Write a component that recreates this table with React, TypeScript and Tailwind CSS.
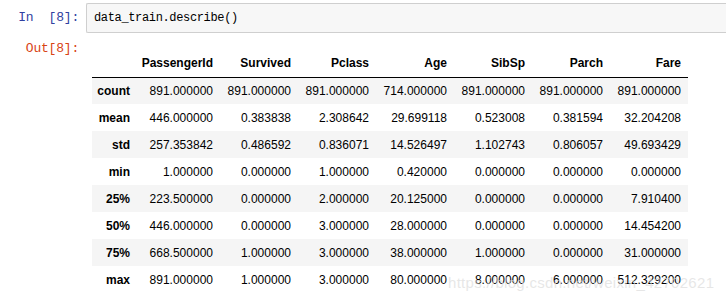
const columns = ["PassengerId", "Survived", "Pclass", "Age", "SibSp", "Parch", "Fare"];

const rows: [string, string[]][] = [
  ["count", ["891.000000", "891.000000", "891.000000", "714.000000", "891.000000", "891.000000", "891.000000"]],
  ["mean", ["446.000000", "0.383838", "2.308642", "29.699118", "0.523008", "0.381594", "32.204208"]],
  ["std", ["257.353842", "0.486592", "0.836071", "14.526497", "1.102743", "0.806057", "49.693429"]],
  ["min", ["1.000000", "0.000000", "1.000000", "0.420000", "0.000000", "0.000000", "0.000000"]],
  ["25%", ["223.500000", "0.000000", "2.000000", "20.125000", "0.000000", "0.000000", "7.910400"]],
  ["50%", ["446.000000", "0.000000", "3.000000", "28.000000", "0.000000", "0.000000", "14.454200"]],
  ["75%", ["668.500000", "1.000000", "3.000000", "38.000000", "1.000000", "0.000000", "31.000000"]],
  ["max", ["891.000000", "1.000000", "3.000000", "80.000000", "8.000000", "6.000000", "512.329200"]],
];

const mono = "font-['Liberation_Mono',monospace]";

export default function App() {
  return (
    <div className="relative w-[726px] h-[302px] overflow-hidden bg-white">
      {/* Input cell */}
      <div className="flex pt-[3px]">
        <div className={`w-[86px] shrink-0 pr-[7px] flex items-center justify-end text-[13px] text-[#303f9f] ${mono}`}>
          <span className="tracking-[-0.2px]">In&nbsp;&nbsp;[8]:</span>
        </div>
        <div className="flex-1 h-[30px] border border-[#cfcfcf] border-r-0 rounded-l-[2px] bg-[#f7f7f7] pl-[7px] flex items-center">
          <span className={`text-[12px] tracking-[-0.35px] text-black ${mono}`}>data_train.describe()</span>
        </div>
      </div>

      {/* Output cell */}
      <div className="flex mt-[8px]">
        <div className={`w-[86px] shrink-0 pr-[7px] text-right text-[13px] leading-[16px] text-[#d84315] ${mono}`}>
          <span className="tracking-[-0.2px]">Out[8]:</span>
        </div>
        <div className="pl-[6px] pt-[8px]">
          <table className="border-collapse text-[12px] text-black font-['Liberation_Sans',Arial,sans-serif]">
            <thead>
              <tr className="h-[28px] border-b border-black">
                <th className="w-[45px]"></th>
                {columns.map((c, i) => (
                  <th key={c} className={`${i === 0 ? "w-[83px]" : "w-[78px]"} text-right font-bold pr-[7px]`}>
                    {c}
                  </th>
                ))}
              </tr>
            </thead>
            <tbody>
              {rows.map(([name, vals], r) => (
                <tr key={name} className={`h-[27px] ${r % 2 === 0 ? "bg-[#f5f5f5]" : "bg-white"}`}>
                  <th className="text-right font-bold pr-[7px]">{name}</th>
                  {vals.map((v, i) => (
                    <td key={i} className="text-right pr-[7px]">
                      {v}
                    </td>
                  ))}
                </tr>
              ))}
            </tbody>
          </table>
        </div>
      </div>

      {/* watermark */}
      <div className="absolute left-[448px] top-[274px] text-[15px] leading-[18px] text-[#dcdcdc]/70 font-['Liberation_Sans',Arial,sans-serif] tracking-[0.3px] pointer-events-none">
        https://blog.csdn.net/weixin_42702621
      </div>
    </div>
  );
}
